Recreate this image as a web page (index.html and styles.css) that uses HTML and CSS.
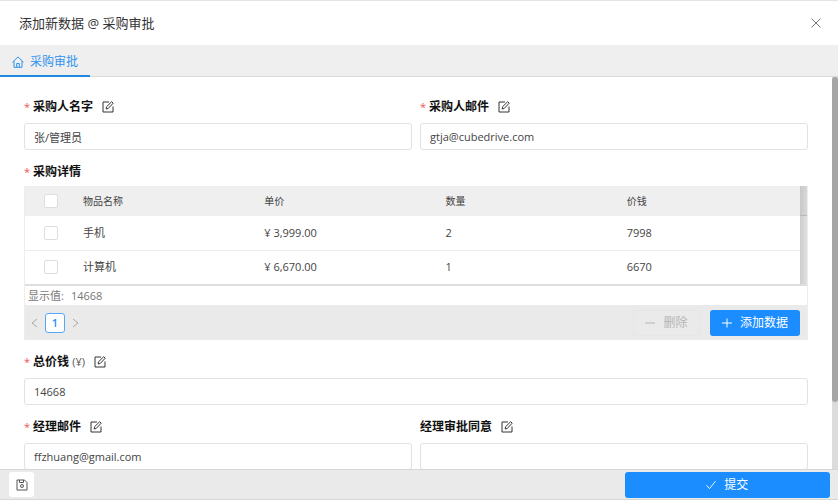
FILE: index.html
```html
<!DOCTYPE html>
<html lang="zh-CN">
<head>
<meta charset="utf-8">
<title>添加新数据 @ 采购审批</title>
<link rel="stylesheet" href="styles.css">
</head>
<body>
<svg class="symbols" aria-hidden="true">
  <symbol id="edit" viewBox="0 0 12 12"><path d="M7 1H1v10h10V5.500M4.200 8l.3-2.200L9.700.7l1.500 1.500L6.200 7.500z"/></symbol>
</svg>
<div class="dialog">
  <header class="titlebar">
    <h1>添加新数据 @ 采购审批</h1>
    <button class="close" type="button" aria-label="关闭"><svg viewBox="0 0 10 10"><path d="M.6.6l8.8 8.8M9.4.6L.6 9.4"/></svg></button>
  </header>
  <nav class="tabs">
    <a class="tab" href="#form"><svg viewBox="0 0 12 12"><path d="M.5 6.2L6 .9l5.5 5.3M2 5v6.3h8V5M4.700 11.300V7.500h2.600v3.800"/></svg>采购审批</a>
  </nav>
  <div class="body">
    <form class="form" id="form">
      <div class="field">
        <div class="label"><label for="buyer"><span class="star">*</span>采购人名字</label><button type="button" class="edit" aria-label="编辑"><svg><use href="#edit"/></svg></button></div>
        <input class="text" id="buyer" type="text" value="张/管理员">
      </div>
      <div class="field">
        <div class="label"><label for="buyer-mail"><span class="star">*</span>采购人邮件</label><button type="button" class="edit" aria-label="编辑"><svg><use href="#edit"/></svg></button></div>
        <input class="text" id="buyer-mail" type="text" value="gtja@cubedrive.com">
      </div>
      <section class="details wide">
        <h2 class="label"><span class="star">*</span>采购详情</h2>
        <div class="grid">
          <div class="rows">
            <table>
              <thead>
                <tr><th class="pick"><input type="checkbox" aria-label="全选"></th><th>物品名称</th><th>单价</th><th>数量</th><th>价钱</th></tr>
              </thead>
              <tbody>
                <tr><td class="pick"><input type="checkbox" aria-label="选择手机"></td><td>手机</td><td>¥ 3,999.00</td><td>2</td><td>7998</td></tr>
                <tr><td class="pick"><input type="checkbox" aria-label="选择计算机"></td><td>计算机</td><td>¥ 6,670.00</td><td>1</td><td>6670</td></tr>
              </tbody>
            </table>
            <div class="rail"><span class="rail-head"></span><span class="rail-body"></span></div>
          </div>
          <div class="summary"><span>显示值:</span><span>14668</span></div>
          <div class="tools">
            <button type="button" class="arrow" aria-label="上一页"><svg viewBox="0 0 7 10"><path d="M6 1L1 5l5 4"/></svg></button>
            <button type="button" class="page">1</button>
            <button type="button" class="arrow" aria-label="下一页"><svg viewBox="0 0 7 10"><path d="M1 1l5 4-5 4"/></svg></button>
            <button type="button" class="remove" disabled><svg viewBox="0 0 10 10"><path d="M0 5h10"/></svg>删除</button>
            <button type="button" class="primary add"><svg viewBox="0 0 10 10"><path d="M0 5h10M5 .5v9"/></svg>添加数据</button>
          </div>
        </div>
      </section>
      <div class="field wide">
        <div class="label"><label for="total"><span class="star">*</span>总价钱 <span class="unit">(¥)</span></label><button type="button" class="edit" aria-label="编辑"><svg><use href="#edit"/></svg></button></div>
        <input class="text" id="total" type="text" value="14668">
      </div>
      <div class="field">
        <div class="label"><label for="manager-mail"><span class="star">*</span>经理邮件</label><button type="button" class="edit" aria-label="编辑"><svg><use href="#edit"/></svg></button></div>
        <input class="text" id="manager-mail" type="text" value="ffzhuang@gmail.com">
      </div>
      <div class="field">
        <div class="label"><label for="approve">经理审批同意</label><button type="button" class="edit" aria-label="编辑"><svg><use href="#edit"/></svg></button></div>
        <input class="text" id="approve" type="text" value="">
      </div>
    </form>
    <div class="scrollbar"><span class="thumb"></span></div>
  </div>
  <footer class="footer">
    <button type="button" class="save" aria-label="保存"><svg viewBox="0 0 12 12"><path d="M1 1h7.500L11 3.500V11H1zM3.500 1v2.500h4V1"/><circle cx="6" cy="7" r="1.500"/></svg></button>
    <button type="submit" form="form" class="primary submit"><svg viewBox="0 0 11 10"><path d="M.5 5.200L3.800 9 10.500.8"/></svg>提交</button>
  </footer>
</div>
</body>
</html>
```
FILE: styles.css
```css
* {
  box-sizing: border-box;
}

body {
  margin: 0;
  background: #fff;
  color: #444;
  font: 11px/20px "Open Sans", "Noto Sans CJK SC", sans-serif;
}

svg {
  flex: none;
  fill: none;
  stroke: currentColor;
  stroke-width: 1;
}

button,
input {
  font: inherit;
  color: inherit;
  margin: 0;
}

button {
  display: flex;
  align-items: center;
  justify-content: center;
  padding: 0;
  border: 0;
  background: none;
}

.symbols {
  display: none;
}

.dialog {
  display: flex;
  flex-direction: column;
  height: 100vh;
  border-top: 1px solid #e4e4e4;
  border-bottom: 1px solid #d6d6d6;
}

.titlebar {
  display: flex;
  align-items: center;
  justify-content: space-between;
  flex: none;
  height: 44px;
  padding: 0 17px 0 19px;
}

.titlebar h1 {
  margin: 0;
  color: #333;
  font-size: 13px;
  font-weight: 400;
}

.close {
  color: #777;
}

.close svg {
  width: 10px;
  height: 10px;
}

.tabs {
  display: flex;
  flex: none;
  height: 32px;
  background: #efefef;
  border-bottom: 1px solid #d9d9d9;
}

.tab {
  display: flex;
  align-items: center;
  gap: 6px;
  height: 32px;
  padding: 4px 12px 0;
  border-bottom: 2px solid #2389e0;
  color: #2f93ee;
  font-size: 12px;
  text-decoration: none;
}

.tab svg {
  width: 12px;
  height: 12px;
}

.body {
  display: flex;
  flex: 1;
  min-height: 0;
}

.form {
  display: grid;
  grid-template-columns: 1fr 1fr;
  align-content: start;
  gap: 12px 8px;
  flex: 1;
  padding: 20px 24px 12px;
  overflow-y: auto;
  scrollbar-width: none;
}

.wide {
  grid-column: 1 / -1;
}

.scrollbar {
  width: 6px;
  background: #dcdcdc;
}

.thumb {
  display: block;
  height: 83%;
  border-radius: 3px;
  background: #a6a6a6;
}

.label {
  display: flex;
  align-items: center;
  gap: 9px;
  height: 20px;
  margin: 0 0 6px;
  color: #111;
  font-size: 12px;
  font-weight: 700;
}

.star {
  margin-right: 3px;
  color: #f0555c;
  font-size: 11px;
  font-weight: 400;
}

.unit {
  color: #555;
  font-size: 11px;
  font-weight: 400;
}

.edit {
  color: #333;
}

.edit svg {
  width: 12px;
  height: 12px;
}

.text {
  display: block;
  width: 100%;
  height: 27px;
  padding: 0 9px;
  border: 1px solid #e2e2e2;
  border-radius: 3px;
  background: #fff;
}

.details .label {
  gap: 0;
  margin-bottom: 4px;
}

.grid {
  border-left: 1px solid #ededed;
  border-right: 1px solid #ededed;
}

.rows {
  display: flex;
  border-bottom: 2px solid #dedede;
}

table {
  flex: 1;
  width: 100%;
  table-layout: fixed;
  border-collapse: collapse;
}

th,
td {
  height: 34px;
  padding: 0 8px;
  text-align: left;
  font-weight: 400;
}

th {
  height: 30px;
  background: #efefef;
  font-size: 10px;
}

tbody tr + tr td {
  border-top: 1px solid #ececec;
}

.pick {
  width: 50px;
  padding: 0 0 0 19px;
}

.pick input {
  display: block;
  appearance: none;
  width: 14px;
  height: 14px;
  border: 1px solid #dedede;
  border-radius: 2px;
  background: #fff;
}

.rail {
  display: flex;
  flex-direction: column;
  flex: none;
  width: 7px;
}

.rail-head {
  height: 30px;
  background: linear-gradient(90deg, #c8c8c8, #d8d8d8);
  border-bottom: 1px solid #b8b8b8;
}

.rail-body {
  flex: 1;
  background: linear-gradient(90deg, #cdcdcd, #e0e0e0);
}

.summary {
  display: flex;
  align-items: center;
  gap: 7px;
  height: 19px;
  padding: 0 3px;
  color: #777;
}

.tools {
  display: flex;
  align-items: center;
  height: 35px;
  padding: 0 7px 0 6px;
  background: #eaeaea;
}

.arrow {
  color: #aaa;
}

.arrow svg {
  width: 7px;
  height: 10px;
}

.page {
  width: 20px;
  height: 20px;
  margin: 0 7px;
  border: 1px solid #52a9f8;
  border-radius: 3px;
  background: #fff;
  color: #2b91ef;
  font-weight: 600;
}

.remove,
.primary {
  gap: 8px;
  height: 26px;
  border-radius: 3px;
  font-size: 12px;
}

.remove svg,
.primary svg {
  width: 10px;
  height: 10px;
}

.remove {
  margin-left: auto;
  width: 67px;
  border: 1px solid #e6e6e6;
  color: #b5b5b5;
}

.primary {
  background: #1b8dff;
  color: #fff;
}

.add {
  width: 90px;
  margin-left: 10px;
}

.footer {
  display: flex;
  align-items: center;
  justify-content: space-between;
  flex: none;
  height: 30px;
  padding: 0 8px 0 9px;
  border-top: 1px solid #d6d6d6;
  background: #eaeaea;
}

.save {
  width: 25px;
  height: 25px;
  border-radius: 3px;
  background: #fff;
  color: #555;
}

.save svg {
  width: 12px;
  height: 12px;
}

.submit {
  width: 25%;
}
```
